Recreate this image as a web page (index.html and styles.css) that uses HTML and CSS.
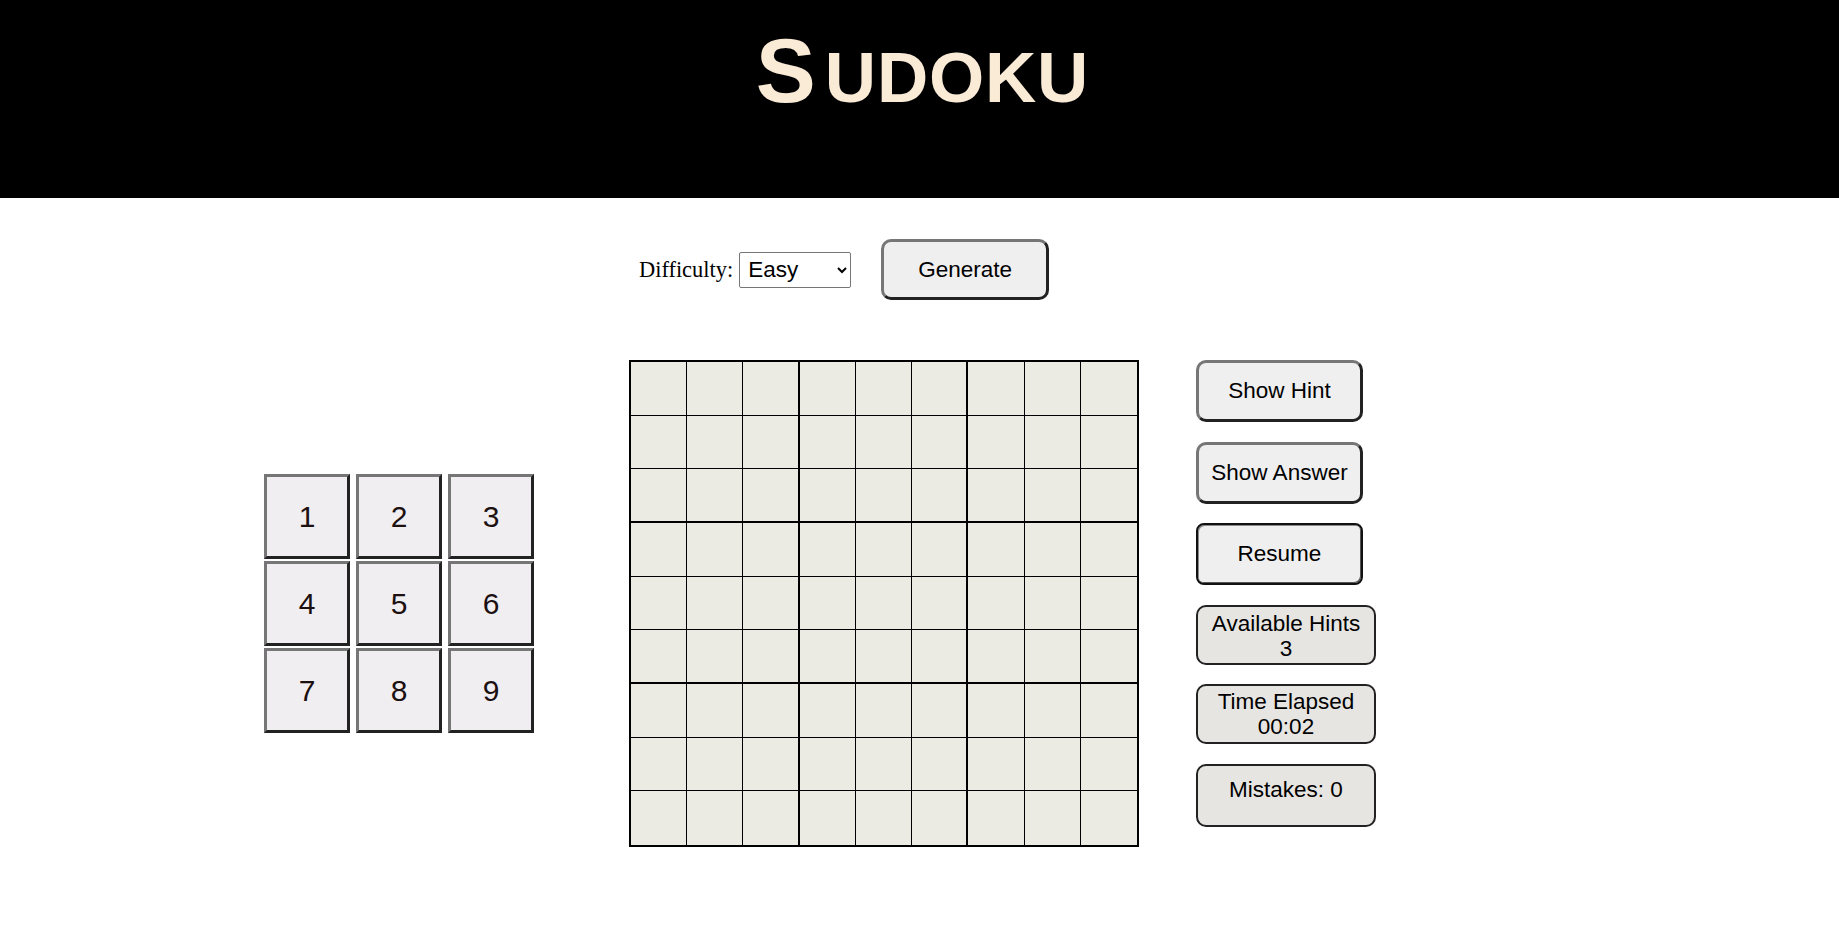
FILE: index.html
```html
<!DOCTYPE html>
<html lang="en">
<head>
<meta charset="utf-8">
<title>Sudoku</title>
<link rel="stylesheet" href="styles.css">
</head>
<body>
<header class="header">
  <h1 class="title"><span class="title-big">S</span><span class="title-small">udoku</span></h1>
</header>
<main class="main">
  <div class="controls">
    <label class="diff-label" for="difficulty">Difficulty:</label>
    <select class="diff-select" id="difficulty">
      <option>Easy</option>
      <option>Medium</option>
      <option>Hard</option>
    </select>
    <button class="btn btn-generate">Generate</button>
  </div>
  <div class="play">
    <div class="keypad">
      <button class="key">1</button><button class="key">2</button><button class="key">3</button>
      <button class="key">4</button><button class="key">5</button><button class="key">6</button>
      <button class="key">7</button><button class="key">8</button><button class="key">9</button>
    </div>
    <div class="board">
      <div class="cell"></div><div class="cell"></div><div class="cell"></div><div class="cell"></div><div class="cell"></div><div class="cell"></div><div class="cell"></div><div class="cell"></div><div class="cell"></div>
      <div class="cell"></div><div class="cell"></div><div class="cell"></div><div class="cell"></div><div class="cell"></div><div class="cell"></div><div class="cell"></div><div class="cell"></div><div class="cell"></div>
      <div class="cell"></div><div class="cell"></div><div class="cell"></div><div class="cell"></div><div class="cell"></div><div class="cell"></div><div class="cell"></div><div class="cell"></div><div class="cell"></div>
      <div class="cell"></div><div class="cell"></div><div class="cell"></div><div class="cell"></div><div class="cell"></div><div class="cell"></div><div class="cell"></div><div class="cell"></div><div class="cell"></div>
      <div class="cell"></div><div class="cell"></div><div class="cell"></div><div class="cell"></div><div class="cell"></div><div class="cell"></div><div class="cell"></div><div class="cell"></div><div class="cell"></div>
      <div class="cell"></div><div class="cell"></div><div class="cell"></div><div class="cell"></div><div class="cell"></div><div class="cell"></div><div class="cell"></div><div class="cell"></div><div class="cell"></div>
      <div class="cell"></div><div class="cell"></div><div class="cell"></div><div class="cell"></div><div class="cell"></div><div class="cell"></div><div class="cell"></div><div class="cell"></div><div class="cell"></div>
      <div class="cell"></div><div class="cell"></div><div class="cell"></div><div class="cell"></div><div class="cell"></div><div class="cell"></div><div class="cell"></div><div class="cell"></div><div class="cell"></div>
      <div class="cell"></div><div class="cell"></div><div class="cell"></div><div class="cell"></div><div class="cell"></div><div class="cell"></div><div class="cell"></div><div class="cell"></div><div class="cell"></div>
    </div>
    <div class="side">
      <button class="btn btn-side">Show Hint</button>
      <button class="btn btn-side">Show Answer</button>
      <button class="btn btn-side btn-focused">Resume</button>
      <div class="info info-hints">Available Hints <br>3</div>
      <div class="info info-time">Time Elapsed<br>00:02</div>
      <div class="info info-mistakes">Mistakes: 0</div>
    </div>
  </div>
</main>
</body>
</html>
```
FILE: styles.css
```css
* {
  box-sizing: border-box;
}

body {
  margin: 0;
  background: #ffffff;
  font-family: "Liberation Serif", "Times New Roman", serif;
}

.header {
  height: 198px;
  background: #000000;
  padding-top: 20px;
}

.title {
  margin: 0;
  padding-left: 6px;
  text-align: center;
  color: #faebd7;
  font-family: "Liberation Sans", Arial, sans-serif;
  font-weight: bold;
  line-height: 1.15;
  font-size: 90px;
}

.title-big {
  font-size: 90px;
  margin-right: 9px;
}

.title-small {
  font-size: 71px;
  text-transform: uppercase;
  letter-spacing: 0.8px;
}

.controls {
  display: flex;
  align-items: center;
  padding: 41px 0 0 639px;
  height: 102px;
}

.diff-label {
  font-size: 22.4px;
  color: #000;
  margin-right: 6px;
}

.diff-select {
  width: 112px;
  height: 36px;
  font-family: "Liberation Sans", Arial, sans-serif;
  font-size: 22.5px;
  border: 1px solid #767676;
  border-radius: 2px;
  background: #fff;
  color: #000;
  padding: 0 2px 0 4px;
  margin: 0 30px 0 0;
}

.btn {
  font-family: "Liberation Sans", Arial, sans-serif;
  font-size: 22.5px;
  color: #000;
  background: #efefef;
  border-style: solid;
  border-width: 3px;
  border-color: #767676 #222222 #222222 #767676;
  border-radius: 10px;
  padding: 0;
  cursor: pointer;
}

.btn-generate {
  width: 168px;
  height: 61px;
}

.play {
  display: flex;
  align-items: flex-start;
  padding: 60px 0 0 264px;
}

.keypad {
  display: grid;
  grid-template-columns: repeat(3, 86px);
  grid-auto-rows: 85px;
  column-gap: 6px;
  row-gap: 2px;
  align-self: center;
  margin-right: 95px;
}

.key {
  font-family: "Liberation Sans", Arial, sans-serif;
  font-size: 30px;
  color: #1c1010;
  background: #f0eef0;
  border-style: solid;
  border-width: 3px;
  border-color: #767676 #222222 #222222 #767676;
  border-radius: 0;
  padding: 0;
}

.board {
  display: grid;
  grid-template-columns: repeat(9, 1fr);
  grid-template-rows: repeat(9, 1fr);
  width: 510px;
  height: 487px;
  border: 2px solid #000;
  background: #ebebe4;
  margin-right: 57px;
}

.cell {
  border-right: 1px solid #000;
  border-bottom: 1px solid #000;
}

.cell:nth-child(9n+3),
.cell:nth-child(9n+6) {
  border-right-width: 2px;
}

.cell:nth-child(9n) {
  border-right: none;
}

.cell:nth-child(n+19):nth-child(-n+27),
.cell:nth-child(n+46):nth-child(-n+54) {
  border-bottom-width: 2px;
}

.cell:nth-child(n+73) {
  border-bottom: none;
}

.side {
  display: flex;
  flex-direction: column;
  align-items: flex-start;
  gap: 19.5px;
}

.btn-side {
  width: 167px;
  height: 62px;
}

.btn-focused {
  border-width: 2px;
  border-color: #111;
  box-shadow: inset 1px 1px 0 #8a8a8a, inset -1px -1px 0 #555;
  border-radius: 8px;
}

.info {
  width: 180px;
  font-family: "Liberation Sans", Arial, sans-serif;
  font-size: 22.5px;
  line-height: 1.13;
  color: #000;
  text-align: center;
  background: #e7e5e2;
  border: 2px solid #222;
  border-radius: 10px;
}

.info-hints {
  height: 60px;
  padding-top: 4px;
}

.info-time {
  height: 60px;
  padding-top: 3px;
}

.info-mistakes {
  height: 63px;
  padding-top: 11px;
}
```
